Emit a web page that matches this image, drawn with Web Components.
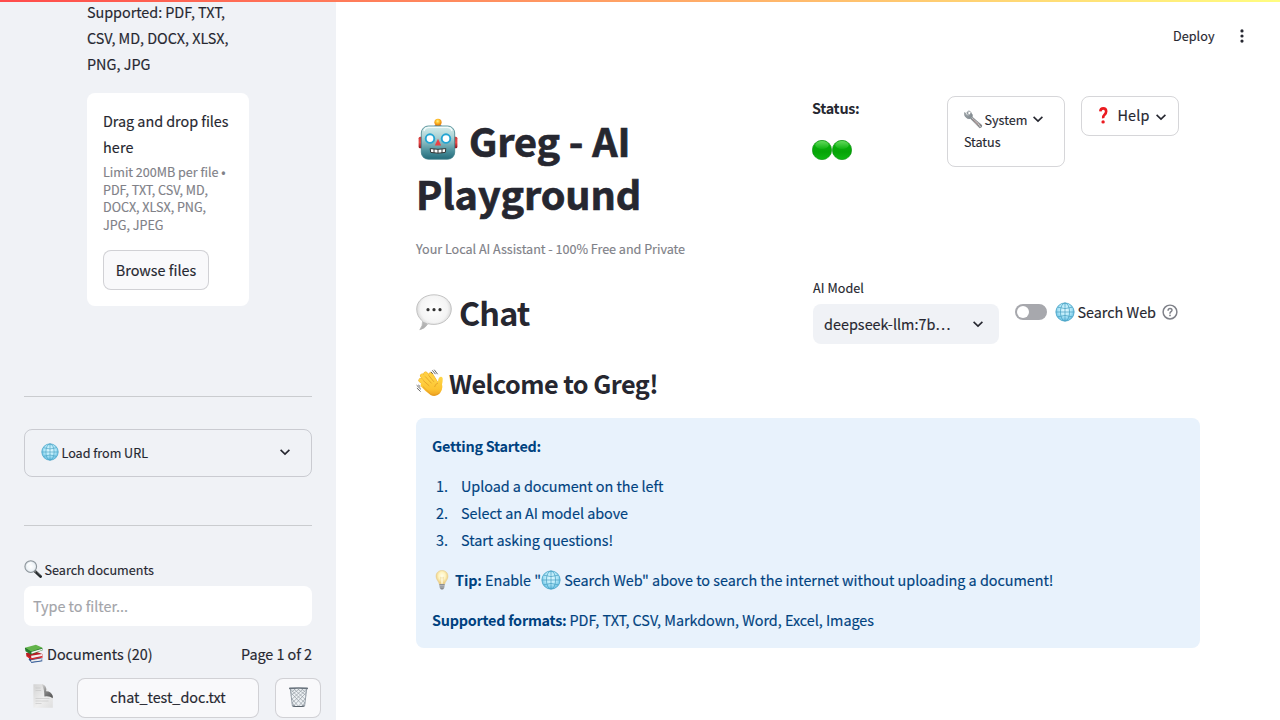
<!DOCTYPE html>
<html lang="en">
<head>
<meta charset="utf-8">
<title>Greg - AI Playground</title>
<style>
html,body{margin:0;height:100%;overflow:hidden;background:#fff}
</style>
</head>
<body>
<greg-app></greg-app>
<script>
const ICONS = {
  chevron: ['0 0 12 12', '<path d="M1.6 3.9 6 8 10.4 3.9" fill="none" stroke="#262730" stroke-width="1.65"/>'],
  dots: ['0 0 14 14', '<g fill="#262730"><circle cx="7" cy="1.9" r="1.6"/><circle cx="7" cy="7" r="1.6"/><circle cx="7" cy="12.1" r="1.6"/></g>'],
  help: ['0 0 16 16', '<g fill="none" stroke="#7e8088" stroke-width="1.45" stroke-linecap="round"><circle cx="8" cy="8" r="6.9"/><path d="M6.1 6.3C6.2 3.8 10 3.8 10 6.2 10 7.6 8 7.7 8 9.2"/></g><circle cx="8" cy="11.4" r=".9" fill="#7e8088"/>'],
  globe: ['0 0 20 20', '<defs><radialGradient id="g" cx=".5" cy=".4"><stop offset="0" stop-color="#e3f9ff"/><stop offset=".65" stop-color="#b4e8f8"/><stop offset="1" stop-color="#7ac9e8"/></radialGradient></defs><circle cx="10" cy="10" r="9.3" fill="url(#g)"/><g fill="none" stroke="#459fc2" stroke-width=".7"><circle cx="10" cy="10" r="9.1"/><ellipse cx="10" cy="10" rx="4.6" ry="9"/><path d="M10 1v18M1 10h18M2.7 5.2Q10 8 17.3 5.2M2.7 14.8Q10 12 17.3 14.8"/></g>'],
  magnifier: ['0 0 20 20', '<defs><radialGradient id="g"><stop offset="0" stop-color="#fff"/><stop offset=".7" stop-color="#eef3f7"/><stop offset="1" stop-color="#cfd7dd"/></radialGradient></defs><path d="M12.2 12.6 18.4 18.4" stroke="#262a2d" stroke-width="3.1" stroke-linecap="round"/><path d="M11.4 11.6l2 2" stroke="#777" stroke-width="1.6"/><circle cx="7.5" cy="7.3" r="6.5" fill="url(#g)" stroke="#8d959b" stroke-width="1.2"/><path d="M3.5 6.2Q5 3.4 8.4 3.1" fill="none" stroke="#fff" stroke-width="1.2"/><path d="M14.5 13.7l3.6 3.3" stroke="#73787b" stroke-width=".7"/>'],
  books: ['0 0 20 20', '<path d="M5.2 14.2 13.8 12l4.7 3.4-1 2.6-10 1.6-2.8-3z" fill="#2e5794"/><path d="M7 17.2l11-2.2-.6 2.5-9.9 1.5z" fill="#eee"/><path d="M7.2 19.5l11.2-1.8" stroke="#2c5593" stroke-width=".9"/><path d="M2 9.6 12 8.2l6.4 2.2v3L7.2 16 2.4 13z" fill="#b71e24"/><path d="M7.1 12.4l11-1.8v2L7.4 15z" fill="#f4eeee"/><path d="M3 12.8 7.5 16l11.2-2.3" fill="none" stroke="#e22b2b" stroke-width="1.1"/><path d="M.9 4.2 1.5 7.6 6.8 11l11.8-4.4-.2-2.3z" fill="#287e31"/><path d="M7.2 8.5l11-3.6.1 1.3-10.8 4z" fill="#f5f5f5"/><path d="M.9 3.9 11.9.8l6.7 3.1-11.7 4z" fill="#63b44b"/><path d="M1 4.3l5.8 3.9v2.7" fill="none" stroke="#246d2c" stroke-width=".8"/>'],
  page: ['0 0 20 24', '<defs><linearGradient id="p" x1="0" y1="0" x2="1" y2="1"><stop offset="0" stop-color="#d3d3d3"/><stop offset=".55" stop-color="#efefef"/><stop offset="1" stop-color="#dedede"/></linearGradient><linearGradient id="f" x1="0" y1="0" x2=".7" y2="1"><stop offset="0" stop-color="#ddd"/><stop offset=".5" stop-color="#888"/><stop offset="1" stop-color="#5c5c5c"/></linearGradient></defs><path d="M.4.2H10L19.8 12v11.8H.4z" fill="url(#p)"/><path d="M9.5.2q4.5 1.3 3.6 7 5-.2 6.7 4.9v2.2q-3.4-2.7-8.4-1.8Q11.4 5 8.8.2z" fill="url(#f)"/><path d="M2.5 4h5M2.5 6.5h5.7M2.5 14.5h14M2.5 17h13M2.5 19.5h6" stroke="#c3c3c3" stroke-width=".6"/>'],
  trash: ['0 0 20 21', '<path d="M1.4 2 3.6 20q6 1.8 12.8 0L18.6 2z" fill="#edf1f4"/><g fill="none" stroke="#8b949c" stroke-width=".65"><path d="M2 6l13.5 14.2M1.6 2.5 17 17M5 2l12.7 11.5M9 2l9.2 7M13 2l5.3 4M2.7 12l8 9M3.4 16.5l3 4M18 6 4.5 20.2M18.4 2.5 3 17M15 2 2.3 13.5M11 2 1.8 9M7 2 1.7 6M17.3 12l-8 9M16.6 16.5l-3 4"/></g><path d="M1.4 2 3.6 20q6 1.8 12.8 0L18.6 2" fill="none" stroke="#909aa3" stroke-width="1"/><path d="M.8 1.5Q10 .6 19.2 1.5" fill="none" stroke="#69737d" stroke-width="1.7" stroke-linecap="round"/><path d="M4 20q6 1.2 12 0" fill="none" stroke="#58616a" stroke-width="1.2"/>'],
  robot: ['0 0 40 42', '<defs><linearGradient id="h" x1="0" y1="0" x2="0" y2="1"><stop offset="0" stop-color="#d6eeed"/><stop offset=".35" stop-color="#a9d0d2"/><stop offset=".75" stop-color="#4b909c"/><stop offset="1" stop-color="#246b7a"/></linearGradient><linearGradient id="e" x1="0" y1="0" x2="0" y2="1"><stop offset="0" stop-color="#d03a3a"/><stop offset=".5" stop-color="#ed4a48"/><stop offset="1" stop-color="#8c1119"/></linearGradient><radialGradient id="o" cx=".45" cy=".35"><stop offset="0" stop-color="#fff18a"/><stop offset=".5" stop-color="#ffc32d"/><stop offset="1" stop-color="#ea8e13"/></radialGradient></defs><rect x=".6" y="18.8" width="5" height="11.5" rx="1.5" fill="url(#e)"/><rect x="34.4" y="18.8" width="5" height="11.5" rx="1.5" fill="url(#e)"/><path d="M15 10v-1.5q5-3.4 10 0V10z" fill="#68539b"/><circle cx="20" cy="4.3" r="3.6" fill="url(#o)"/><rect x="3.3" y="8" width="33.4" height="33.2" rx="7" fill="url(#h)" stroke="#3e7f89" stroke-width=".8"/><path d="M6 13q1-3.6 5-3.6h18q4 0 5 3.6" fill="none" stroke="#f3fbfb" stroke-width="1.3"/><g fill="#fff" stroke="#24a5d3" stroke-width="1.9"><circle cx="12" cy="20.6" r="4.3"/><circle cx="28" cy="20.6" r="4.3"/></g><path d="M20 20.8l3.2 6.7h-6.4z" fill="#e94245"/><path d="M12.2 30.6q7.8 1.4 15.6 0l-.5 3.8q-7.3 1.6-14.6 0z" fill="#fff" stroke="#303737" stroke-width="1"/><path d="M16 31v4M20 31.2v4M24 31v4" stroke="#303737" stroke-width="1"/>'],
  speech: ['0 0 36 37', '<defs><radialGradient id="s" cx=".5" cy=".4" r=".6"><stop offset="0" stop-color="#fff"/><stop offset=".65" stop-color="#f4f4f4"/><stop offset="1" stop-color="#c3c3c3"/></radialGradient></defs><path d="M18 .8C27.6.8 35.3 6.7 35.3 15S27.8 30.4 18 30.4q-3.4 0-6-.7-3.1 5.2-8.2 6 3.2-4 2.8-8.6Q.7 22.5.7 15C.7 6.7 8.4.8 18 .8z" fill="url(#s)" stroke="#bdbdbd" stroke-width=".9"/><path d="M7.1 27.7Q7 32.5 4.2 35.5q4.5-1.2 7.4-6" fill="#a5a5a5" opacity=".65"/><g fill="#333"><circle cx="12" cy="15.7" r="1.6"/><circle cx="18" cy="15.7" r="1.6"/><circle cx="24" cy="15.7" r="1.6"/></g>'],
  wave: ['0 0 28 28', '<defs><linearGradient id="w" x1="0" y1="0" x2="0" y2="1"><stop offset="0" stop-color="#ffd748"/><stop offset=".65" stop-color="#fcc331"/><stop offset="1" stop-color="#eea020"/></linearGradient></defs><g stroke="#eeac27" stroke-linecap="round" stroke-width="4.5"><path d="M13 18 4.6 11.3M15 16 6.2 6.8M17 14 9.6 4.8M20 14 14.7 5.5"/></g><g stroke="#ffd043" stroke-linecap="round" stroke-width="3.7"><path d="M13 18 4.6 11.3M15 16 6.2 6.8M17 14 9.6 4.8M20 14 14.7 5.5"/></g><path d="M8.2 14.2Q12 8 17.2 8.9L22 14Q21.7 9.6 23.7 8q2.7-1.2 3 1.5.1 2.9-.7 6.1 1.3 4.5-2 8.6-4 4.3-9.1 2.1Q9.2 22.4 5 17.6 3.7 15 6.1 14.2z" fill="url(#w)"/><path d="M7 17.6 14.5 25q4.5 2.7 8.8-1M22 14q-2.9 1-3.4 4M7.3 11.6l6 5.3M9.1 7.4l6.5 7M12.6 6.3l5.3 6.5" fill="none" stroke="#e29a25" stroke-width=".8"/><path d="M16.3 1.3 19.5 5.2M18.2.7l3.4 4.5M.6 16.2l4.3 4.1M.9 19l3.7 3.6M14.9 2.8l1.7 2M2.3 16l2 1.7" stroke="#555" stroke-width=".9"/>'],
  wrench: ['0 0 20 20', '<defs><linearGradient id="r" x1="0" y1="0" x2="1" y2="1"><stop offset="0" stop-color="#a6aeb3"/><stop offset=".45" stop-color="#7f878c"/><stop offset=".7" stop-color="#b4b3b3"/><stop offset="1" stop-color="#60585a"/></linearGradient></defs><path d="M4.8.9 2.9 3l.8 1.6 2 .6 1.7-2.1Q9.7 4.9 8.6 7.3l10 8.6q.7 2.7-2.2 2.9L6.7 9Q3.8 10 1.5 7.2-.2 4.9.8 2.5L2.4 4.9l2 1.3M4.8.9q1.9.3 3 2.2" fill="url(#r)" stroke="#727a7f" stroke-width=".55"/><path d="M8 8.1l8.8 8.4" stroke="#e0e2e3" stroke-width=".9"/><path d="M9 9.6l5.8 5.6" stroke="#8b6563" stroke-width=".8"/><circle cx="17" cy="17.2" r=".7" fill="#eee"/>'],
  question: ['0 0 9 17', '<path d="M1.3 4.3Q1.6 1.4 4.3 1.4T7.2 4.3Q7.2 6.3 5.5 7.8T4.2 11.3" fill="none" stroke="#eb1b20" stroke-width="2.6"/><circle cx="4.1" cy="14.9" r="1.7" fill="#eb1b20"/>'],
  green: ['0 0 20 20', '<defs><linearGradient id="c" x1="0" y1="0" x2="0" y2="1"><stop offset="0" stop-color="#13b413"/><stop offset=".3" stop-color="#08ae0b"/><stop offset=".6" stop-color="#06a408"/><stop offset="1" stop-color="#0fb812"/></linearGradient><linearGradient id="t" x1="0" y1="0" x2="0" y2="1"><stop offset="0" stop-color="#7be373"/><stop offset="1" stop-color="#12b614"/></linearGradient></defs><circle cx="10" cy="10" r="9.7" fill="url(#c)" stroke="#078d0a" stroke-width=".6"/><ellipse cx="10" cy="5" rx="6.8" ry="4" fill="url(#t)" opacity=".75"/>'],
  bulb: ['0 0 14 20', '<defs><radialGradient id="b" cx=".5" cy=".4"><stop offset="0" stop-color="#fffde9"/><stop offset=".55" stop-color="#fff4c0"/><stop offset="1" stop-color="#edd087"/></radialGradient></defs><path d="M7 .4c3.7 0 6 2.6 6 5.9 0 3.5-2.8 5-3.3 8.1H4.3C3.8 11.3 1 9.8 1 6.3 1 3 3.3.4 7 .4z" fill="url(#b)" stroke="#e4cd92" stroke-width=".5"/><path d="M5.4 7.2 6.2 14h1.6l.8-6.8-1.6 1z" fill="#fff8d8" stroke="#e2c98a" stroke-width=".4"/><path d="M4.3 14.1h5.4l-.5 3.9-1.2 1.4H6L4.8 18z" fill="#888a8e"/><path d="M4.6 15.4h4.8M4.8 17h4.4" stroke="#d5d7da" stroke-width=".6"/>']
};

class UiIcon extends HTMLElement {
  connectedCallback() {
    const [box, body] = ICONS[this.getAttribute('name')];
    const root = this.attachShadow({mode: 'open'});
    root.innerHTML = `<style>:host{display:inline-block;flex:none;line-height:0}svg{display:block;width:100%;height:100%}</style>
      <svg viewBox="${box}" preserveAspectRatio="none" aria-hidden="true">${body}</svg>`;
    this.style.width = this.getAttribute('w') + 'px';
    this.style.height = (this.getAttribute('h') || this.getAttribute('w')) + 'px';
  }
}
customElements.define('ui-icon', UiIcon);

// Single line of text, tracked so that its advance equals the "w" attribute.
class UiText extends HTMLElement {
  connectedCallback() {
    const root = this.attachShadow({mode: 'open'});
    const size = +(this.getAttribute('s') || 16);
    const lh = this.getAttribute('lh') || size * 1.6;
    const weight = this.getAttribute('b') || 400;
    const stroke = size > 40 ? .7 : weight > 400 ? 0 : .15;
    const lift = size === 14 ? 0 : size * .036;
    root.innerHTML = `<style>
      :host{display:block;flex:none;white-space:pre;height:${lh}px;line-height:${lh}px;font-size:${size * .9}px;font-weight:${weight};-webkit-text-stroke:${stroke}px currentColor}
      span{display:inline-block;line-height:inherit;vertical-align:top;margin-top:${-lift}px}
    </style><span><slot></slot></span>`;
    const w = +this.getAttribute('w');
    if (w) {
      const span = root.querySelector('span');
      const natural = span.getBoundingClientRect().width;
      span.style.letterSpacing = (w - natural) / this.textContent.length + 'px';
    }
  }
}
customElements.define('ui-text', UiText);

class UiBox extends HTMLElement {
  connectedCallback() {
    this.attachShadow({mode: 'open'}).innerHTML = `<style>
      :host{display:flex;box-sizing:border-box;align-items:center;border:1px solid rgba(49,51,63,.2);border-radius:8px;flex:none}
    </style><slot></slot>`;
  }
}
customElements.define('ui-box', UiBox);

class UiToggle extends HTMLElement {
  connectedCallback() {
    this.attachShadow({mode: 'open'}).innerHTML = `<style>
      :host{display:flex;box-sizing:border-box;width:32px;height:16px;border-radius:8px;background:#a7a8ad;padding:2px;flex:none}
      i{width:12px;height:12px;border-radius:50%;background:#fff}
    </style><i></i>`;
  }
}
customElements.define('ui-toggle', UiToggle);

class UploadPanel extends HTMLElement {
  connectedCallback() {
    this.attachShadow({mode: 'open'}).innerHTML = `<style>
      :host{display:block;margin:0 63px;width:162px}
      .drop{margin-top:16px;box-sizing:border-box;height:213px;border-radius:8px;background:#fff;padding:16px}
      .hint{color:#808188;margin-top:3.4px}
      ui-box{width:106px;height:40px;margin-top:16.4px;justify-content:center;background:#f9f9fb}
    </style>
    <ui-text w="138">Supported: PDF, TXT,</ui-text>
    <ui-text w="141.5">CSV, MD, DOCX, XLSX,</ui-text>
    <ui-text w="63.5">PNG, JPG</ui-text>
    <div class="drop">
      <ui-text w="125.5">Drag and drop files</ui-text>
      <ui-text w="30.5">here</ui-text>
      <div class="hint">
        <ui-text s="14" lh="17.5" w="122.5">Limit 200MB per file •</ui-text>
        <ui-text s="14" lh="17.5" w="105">PDF, TXT, CSV, MD,</ui-text>
        <ui-text s="14" lh="17.5" w="103">DOCX, XLSX, PNG,</ui-text>
        <ui-text s="14" lh="17.5" w="60.5">JPG, JPEG</ui-text>
      </div>
      <ui-box><ui-text w="80.5" style="margin-top:1.5px">Browse files</ui-text></ui-box>
    </div>`;
  }
}
customElements.define('upload-panel', UploadPanel);

class DocumentList extends HTMLElement {
  connectedCallback() {
    this.attachShadow({mode: 'open'}).innerHTML = `<style>
      :host{display:block}
      .label{display:flex;gap:2.5px;height:22px;align-items:center}
      .label ui-icon{margin-top:-2px}
      .input{display:flex;align-items:center;height:40px;margin-top:5px;border-radius:8px;background:#fff;padding-left:9px;color:#a3a4a9}
      .head{display:flex;align-items:center;height:26px;margin-top:16px}
      .head ui-text{margin-top:-1.5px}
      .head ui-text:last-child{margin-left:auto}
      .row{display:flex;align-items:center;margin-top:10px;width:297px}
      ui-box{height:40px;justify-content:center;background:#f9f9fb}
    </style>
    <div class="label"><ui-icon name="magnifier" w="18"></ui-icon><ui-text s="14" w="109.5">Search documents</ui-text></div>
    <div class="input"><ui-text w="95">Type to filter...</ui-text></div>
    <div class="head"><ui-icon name="books" w="20" h="19" style="margin-top:-3px"></ui-icon><ui-text style="margin-left:3px" w="105.5">Documents (20)</ui-text><ui-text w="71">Page 1 of 2</ui-text></div>
    <div class="row">
      <ui-icon name="page" w="20" h="24" style="margin:-3px 24px 0 9px"></ui-icon>
      <ui-box style="width:182px"><ui-text w="115.5" style="margin-top:-1.5px">chat_test_doc.txt</ui-text></ui-box>
      <ui-box style="width:46px;margin-left:16px"><ui-icon name="trash" w="19" h="20" style="margin-top:-2px"></ui-icon></ui-box>
    </div>`;
  }
}
customElements.define('document-list', DocumentList);

class SideBar extends HTMLElement {
  connectedCallback() {
    this.attachShadow({mode: 'open'}).innerHTML = `<style>
      :host{display:block;box-sizing:border-box;width:336px;height:720px;padding:0 24px;background:#f0f2f6;overflow:hidden}
      hr{border:0;height:1px;margin:0;background:#cacccf}
      .url{height:48px;margin:32px 0 48px;padding:0 20px 0 16px;gap:2.5px}
    </style>
    <upload-panel></upload-panel>
    <hr style="margin-top:90.2px">
    <ui-box class="url"><ui-icon name="globe" w="18" style="margin-top:-2px"></ui-icon><ui-text s="14" w="86.5">Load from URL</ui-text><ui-icon name="chevron" w="12" style="margin:-2px 0 0 auto"></ui-icon></ui-box>
    <hr>
    <document-list style="margin-top:33px"></document-list>`;
  }
}
customElements.define('side-bar', SideBar);

class AppHeader extends HTMLElement {
  connectedCallback() {
    this.attachShadow({mode: 'open'}).innerHTML = `<style>
      :host{display:grid;grid-template-columns:396px 135px 134px 98px;height:166px;align-items:start}
      .title{padding-top:19.5px}
      .line{display:flex}
      .caption{margin-top:16.5px;color:#808188}
      .dots{display:flex;margin-top:18px}
      ui-box{align-items:flex-start}
    </style>
    <div>
      <div class="title">
        <div class="line"><ui-icon name="robot" w="40" h="42" style="margin:2.5px 11px 0 2px"></ui-icon><ui-text s="44" lh="52.8" b="700" w="161.5">Greg - AI</ui-text></div>
        <ui-text s="44" lh="52.8" b="700" w="225">Playground</ui-text>
      </div>
      <ui-text class="caption" s="14" w="269">Your Local AI Assistant - 100% Free and Private</ui-text>
    </div>
    <div>
      <ui-text b="600" w="47.5">Status:</ui-text>
      <div class="dots"><ui-icon name="green" w="20"></ui-icon><ui-icon name="green" w="20"></ui-icon></div>
    </div>
    <ui-box style="width:118px;height:71px;padding:12px 16px">
      <div>
        <div class="line"><ui-icon name="wrench" w="19" style="margin:1px 1.5px 0 0"></ui-icon><ui-text s="14" w="43" lh="22.4">System</ui-text><ui-icon name="chevron" w="12" style="margin:4px 0 0 4.5px"></ui-icon></div>
        <ui-text s="14" w="36.5" lh="22.4">Status</ui-text>
      </div>
    </ui-box>
    <ui-box style="width:98px;height:40px;padding-left:17px;align-items:center">
      <ui-icon name="question" w="9" h="17" style="margin-top:-2px"></ui-icon><ui-text w="32" style="margin:-1.5px 0 0 9.5px">Help</ui-text><ui-icon name="chevron" w="12" style="margin:2px 0 0 5.5px"></ui-icon>
    </ui-box>`;
  }
}
customElements.define('app-header', AppHeader);

class ChatControls extends HTMLElement {
  connectedCallback() {
    this.attachShadow({mode: 'open'}).innerHTML = `<style>
      :host{display:grid;grid-template-columns:397px 202px 1fr;height:90px;align-items:start}
      .chat{display:flex;padding-top:29.5px;gap:7px}
      .select{display:flex;align-items:center;box-sizing:border-box;width:186px;height:40px;border-radius:8px;background:#f0f2f6;padding:0 15px 0 11px;justify-content:space-between}
      .web{display:flex;align-items:center;height:26px;margin-top:37px}
    </style>
    <div class="chat"><ui-icon name="speech" w="36" h="37" style="margin-top:2.5px"></ui-icon><ui-text s="36" lh="43.2" b="600" w="70.5">Chat</ui-text></div>
    <div style="padding-top:15px"><ui-text s="14" lh="22.4" w="51">AI Model</ui-text>
      <div class="select" style="margin-top:4.6px"><ui-text w="126.5">deepseek-llm:7b…</ui-text><ui-icon name="chevron" w="12"></ui-icon></div></div>
    <div class="web"><ui-toggle></ui-toggle><ui-icon name="globe" w="20" style="margin:0 2.5px 0 8px"></ui-icon><ui-text w="78.5">Search Web</ui-text><ui-icon name="help" w="16" style="margin-left:5.5px"></ui-icon></div>`;
  }
}
customElements.define('chat-controls', ChatControls);

class InfoCard extends HTMLElement {
  connectedCallback() {
    this.attachShadow({mode: 'open'}).innerHTML = `<style>
      :host{display:block;box-sizing:border-box;height:230px;border-radius:8px;padding:16px;background:#e8f2fc;color:#004280}
      .list{margin:13.4px 0 14px}
      .item,.tip{display:flex;align-items:center}
      .item{height:27px}
      .item ui-text:first-child{width:25px;margin-left:4px}
      .tip{margin-bottom:14.4px}
    </style>
    <ui-text b="600" w="109">Getting Started:</ui-text>
    <div class="list">
      <div class="item"><ui-text w="12">1.</ui-text><ui-text w="202.5">Upload a document on the left</ui-text></div>
      <div class="item"><ui-text w="12">2.</ui-text><ui-text w="167">Select an AI model above</ui-text></div>
      <div class="item"><ui-text w="12">3.</ui-text><ui-text w="152">Start asking questions!</ui-text></div>
    </div>
    <div class="tip"><ui-icon name="bulb" w="14" h="20" style="margin:-2px 6px 0 3px"></ui-icon><ui-text b="600" w="30">Tip: </ui-text><ui-text w="56">Enable "</ui-text><ui-icon name="globe" w="20" style="margin-top:-1px"></ui-icon><ui-text w="492.5"> Search Web" above to search the internet without uploading a document!</ui-text></div>
    <div style="display:flex"><ui-text b="600" w="137.5">Supported formats: </ui-text><ui-text w="304.5">PDF, TXT, CSV, Markdown, Word, Excel, Images</ui-text></div>`;
  }
}
customElements.define('info-card', InfoCard);

class GregApp extends HTMLElement {
  connectedCallback() {
    this.attachShadow({mode: 'open'}).innerHTML = `<style>
      :host{display:flex;position:relative;width:1280px;height:720px;overflow:hidden;background:#fff;color:#262730;font-family:"Noto Sans CJK JP","Noto Sans CJK SC",sans-serif}
      .bar{position:absolute;inset:0 0 auto;height:2px;background:linear-gradient(90deg,#ff4b4b,#fffd80)}
      main{flex:1;padding:0 80px}
      .top{display:flex;justify-content:flex-end;align-items:center;height:72px;margin-right:-49px;gap:20.5px}
      app-header{padding-top:24px}
      .welcome{display:flex;gap:5px;height:34px;margin-top:16px}
      info-card{margin-top:16px}
    </style>
    <side-bar></side-bar>
    <main>
      <div class="top"><ui-text s="14" w="41.5">Deploy</ui-text><ui-icon name="dots" w="14"></ui-icon></div>
      <app-header></app-header>
      <chat-controls></chat-controls>
      <div class="welcome"><ui-icon name="wave" w="28" style="margin-top:1px"></ui-icon><ui-text s="28" lh="33.6" b="600" w="209">Welcome to Greg!</ui-text></div>
      <info-card></info-card>
    </main>
    <div class="bar"></div>`;
  }
}
customElements.define('greg-app', GregApp);
</script>
</body>
</html>
